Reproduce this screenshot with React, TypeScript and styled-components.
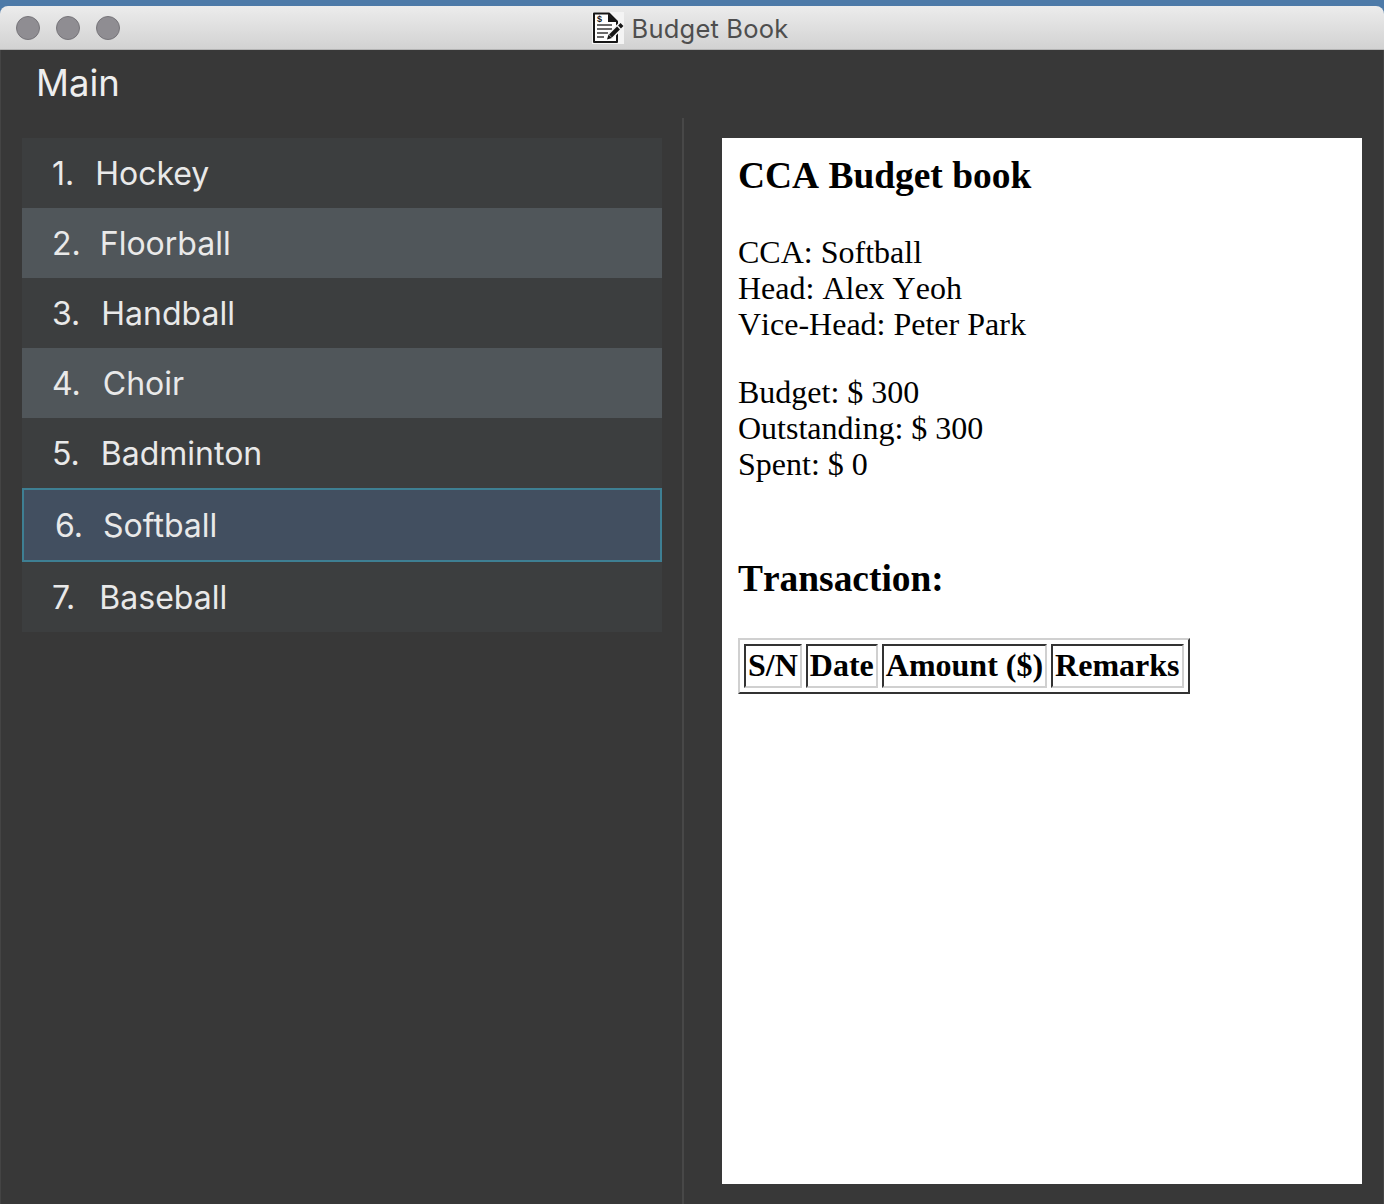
import React from "react";
import styled, { createGlobalStyle } from "styled-components";

const GlobalStyle = createGlobalStyle`
  html, body { margin: 0; padding: 0; background: #383838; }
  body { font-family: Inter, "Noto Sans", sans-serif; overflow: hidden; }
`;

const Desktop = styled.div`
  width: 1384px;
  height: 1204px;
  background: #4d7aa8;
  padding-top: 6px;
  box-sizing: border-box;
  display: flex;
  flex-direction: column;
`;

const TitleBar = styled.div`
  position: relative;
  height: 44px;
  box-sizing: border-box;
  flex: none;
  display: flex;
  align-items: center;
  justify-content: center;
  gap: 8px;
  padding-right: 4px;
  border-radius: 8px 8px 0 0;
  border-bottom: 1px solid #b4b4b4;
  background: linear-gradient(#ececec, #d2d2d2);
`;

const Lights = styled.div`
  position: absolute;
  left: 16px;
  top: 10px;
  display: flex;
  gap: 16px;
`;

const Light = styled.span`
  width: 24px;
  height: 24px;
  box-sizing: border-box;
  border-radius: 50%;
  background: #8f8d92;
  border: 1px solid #77757a;
`;

const TitleText = styled.span`
  font-size: 25.5px;
  line-height: 32px;
  padding-top: 2px;
  color: #4e4e4e;
  letter-spacing: 0.2px;
`;

const Window = styled.div`
  flex: 1;
  display: flex;
  flex-direction: column;
  background: #383838;
  min-height: 0;
  box-shadow: inset 1px 0 #444444, inset -1px 0 #444444;
`;

const MenuBar = styled.div`
  height: 68px;
  flex: none;
  box-sizing: border-box;
  padding: 11px 0 0 36px;
  font-size: 36.5px;
  line-height: 44px;
  color: #eeeeee;
`;

const Panes = styled.div`
  flex: 1;
  display: flex;
  min-height: 0;
`;

const LeftPane = styled.div`
  width: 682px;
  flex: none;
  box-sizing: border-box;
  padding: 20px 20px 0 22px;
`;

const Divider = styled.div`
  width: 2px;
  flex: none;
  background: #484848;
`;

const RightPane = styled.div`
  flex: 1;
  box-sizing: border-box;
  padding: 20px 22px 20px 38px;
  display: flex;
`;

const List = styled.div`
  display: flex;
  flex-direction: column;
`;

const Row = styled.div<{ $alt?: boolean; $selected?: boolean }>`
  height: ${(p) => (p.$selected ? 74 : 70)}px;
  box-sizing: border-box;
  display: flex;
  align-items: center;
  padding: 1px 0 0 ${(p) => (p.$selected ? 31 : 30)}px;
  font-size: 32px;
  color: #e9e9e9;
  background: ${(p) => (p.$selected ? "#424f60" : p.$alt ? "#50565a" : "#3c3e3f")};
  border: ${(p) => (p.$selected ? "2px solid #3e7f93" : "none")};
`;

const Index = styled.span<{ $gap: number }>`
  margin-right: ${(p) => p.$gap}px;
`;

const Page = styled.div`
  flex: 1;
  background: #ffffff;
  box-sizing: border-box;
  padding: 16px;
  color: #000000;
  font-family: "Liberation Serif", "Times New Roman", serif;
  font-size: 32px;
  line-height: 36px;
  font-kerning: none;
`;

const Heading = styled.h3<{ $top?: number }>`
  margin: ${(p) => p.$top ?? 0}px 0 0;
  font-size: 37.44px;
  line-height: 44px;
  font-weight: 700;
`;

const Block = styled.div<{ $top: number }>`
  margin-top: ${(p) => p.$top}px;
`;

const TxTable = styled.table`
  margin-top: 37px;
  border-collapse: separate;
  border-spacing: 4px;
  border: 2px solid;
  border-color: #d0d0d0 #333333 #333333 #d0d0d0;
`;

const Th = styled.th`
  padding: 1px 2px 3px;
  border: 2px solid;
  border-color: #333333 #d0d0d0 #d0d0d0 #333333;
  line-height: 36px;
  font-weight: 700;
`;

const BookIcon = () => (
  <svg width="32" height="32" viewBox="0 0 32 32" aria-hidden="true">
    <rect width="32" height="32" fill="#f4f4f4" />
    <path d="M2 1.500h15l8 8V30H2z" fill="#fff" stroke="#161616" strokeWidth="2" strokeLinejoin="round" />
    <path d="M16 1.500v8.500h9z" fill="#161616" />
    <path d="M5 13h15M5 17h15M5 21h11M5 25h7" stroke="#3a3a3a" strokeWidth="1.500" />
    <path d="M18 24.500L29 13.500" stroke="#f4f4f4" strokeWidth="7" />
    <path d="M15 27.500l1.500-5 3.500 3.500z" fill="#161616" />
    <path d="M18.500 24L26.500 16" stroke="#161616" strokeWidth="4" />
    <path d="M27.500 15L30 12.500" stroke="#161616" strokeWidth="4" />
    <text x="5" y="10" fontSize="9" fontWeight="700" fontFamily="Liberation Sans, sans-serif" fill="#161616">$</text>
  </svg>
);

const ccas = [
  { name: "Hockey", gap: 21 },
  { name: "Floorball", gap: 19 },
  { name: "Handball", gap: 21 },
  { name: "Choir", gap: 22 },
  { name: "Badminton", gap: 21 },
  { name: "Softball", gap: 20 },
  { name: "Baseball", gap: 24 },
];
const headers = ["S/N", "Date", "Amount ($)", "Remarks"];

export default function App() {
  return (
    <Desktop>
      <GlobalStyle />
      <TitleBar>
        <Lights>
          <Light />
          <Light />
          <Light />
        </Lights>
        <BookIcon />
        <TitleText>Budget Book</TitleText>
      </TitleBar>
      <Window>
        <MenuBar>Main</MenuBar>
        <Panes>
          <LeftPane>
            <List>
              {ccas.map((cca, i) => (
                <Row key={cca.name} $alt={i === 1 || i === 3} $selected={i === 5}>
                  <Index $gap={cca.gap}>{i + 1}.</Index>
                  {cca.name}
                </Row>
              ))}
            </List>
          </LeftPane>
          <Divider />
          <RightPane>
            <Page>
              <Heading>CCA Budget book</Heading>
              <Block $top={36}>
                CCA: Softball
                <br />
                Head: Alex Yeoh
                <br />
                Vice-Head: Peter Park
              </Block>
              <Block $top={32}>
                Budget: $ 300
                <br />
                Outstanding: $ 300
                <br />
                Spent: $ 0
              </Block>
              <Heading $top={75}>Transaction:</Heading>
              <TxTable>
                <thead>
                  <tr>
                    {headers.map((h) => (
                      <Th key={h}>{h}</Th>
                    ))}
                  </tr>
                </thead>
              </TxTable>
            </Page>
          </RightPane>
        </Panes>
      </Window>
    </Desktop>
  );
}
